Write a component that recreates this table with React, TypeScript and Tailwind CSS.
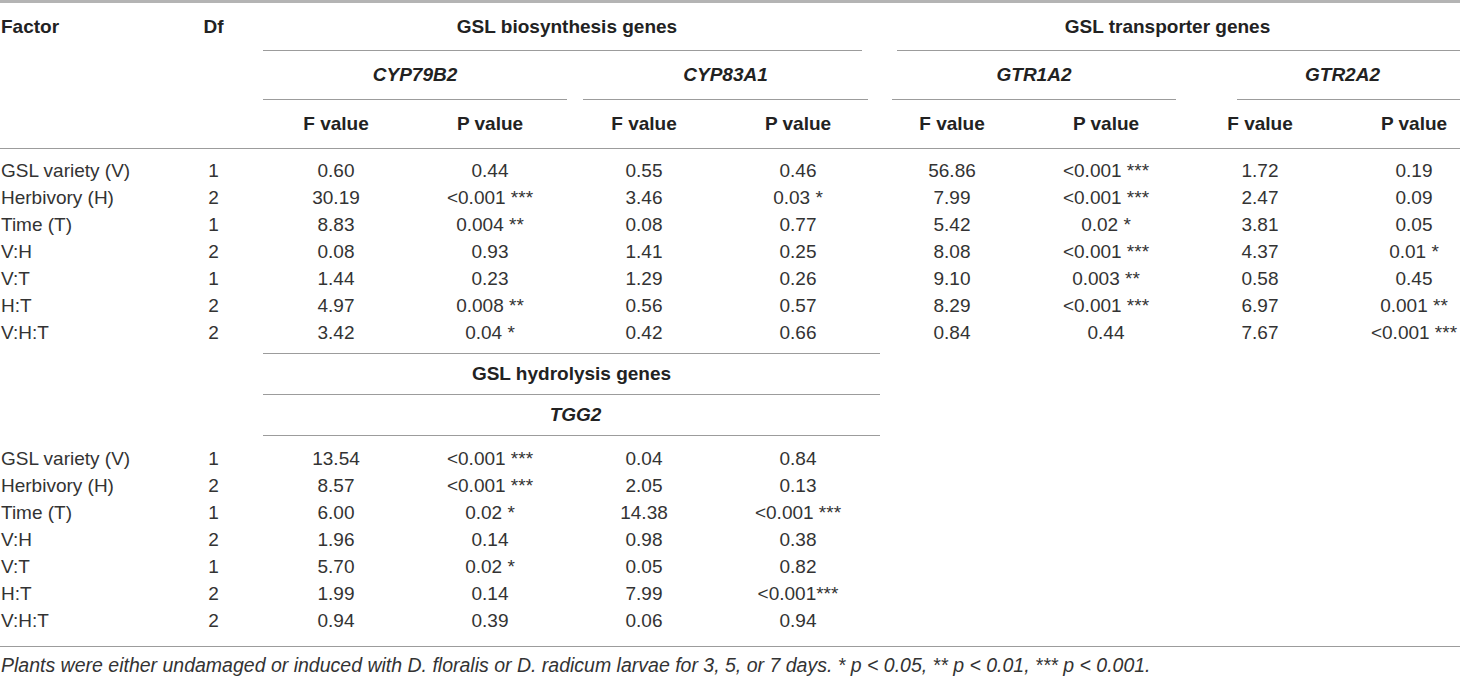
import React from "react";

const GRID = "grid grid-cols-[168px_91px_154px_154px_154px_154px_154px_154px_154px_123px]";

type Row = { f: string; df: string; v: string[] };

const block1: Row[] = [
  { f: "GSL variety (V)", df: "1", v: ["0.60", "0.44", "0.55", "0.46", "56.86", "<0.001 ***", "1.72", "0.19"] },
  { f: "Herbivory (H)", df: "2", v: ["30.19", "<0.001 ***", "3.46", "0.03 *", "7.99", "<0.001 ***", "2.47", "0.09"] },
  { f: "Time (T)", df: "1", v: ["8.83", "0.004 **", "0.08", "0.77", "5.42", "0.02 *", "3.81", "0.05"] },
  { f: "V:H", df: "2", v: ["0.08", "0.93", "1.41", "0.25", "8.08", "<0.001 ***", "4.37", "0.01 *"] },
  { f: "V:T", df: "1", v: ["1.44", "0.23", "1.29", "0.26", "9.10", "0.003 **", "0.58", "0.45"] },
  { f: "H:T", df: "2", v: ["4.97", "0.008 **", "0.56", "0.57", "8.29", "<0.001 ***", "6.97", "0.001 **"] },
  { f: "V:H:T", df: "2", v: ["3.42", "0.04 *", "0.42", "0.66", "0.84", "0.44", "7.67", "<0.001 ***"] },
];

const block2: Row[] = [
  { f: "GSL variety (V)", df: "1", v: ["13.54", "<0.001 ***", "0.04", "0.84"] },
  { f: "Herbivory (H)", df: "2", v: ["8.57", "<0.001 ***", "2.05", "0.13"] },
  { f: "Time (T)", df: "1", v: ["6.00", "0.02 *", "14.38", "<0.001 ***"] },
  { f: "V:H", df: "2", v: ["1.96", "0.14", "0.98", "0.38"] },
  { f: "V:T", df: "1", v: ["5.70", "0.02 *", "0.05", "0.82"] },
  { f: "H:T", df: "2", v: ["1.99", "0.14", "7.99", "<0.001***"] },
  { f: "V:H:T", df: "2", v: ["0.94", "0.39", "0.06", "0.94"] },
];

function DataRow({ row }: { row: Row }) {
  return (
    <div className={GRID + " h-[27px] items-center whitespace-nowrap"}>
      <div className="pl-[1px]">{row.f}</div>
      <div className="text-center">{row.df}</div>
      {row.v.map((val, i) => (
        <div key={i} className={i === 7 ? "text-center pl-[31px]" : "text-center"}>
          {val}
        </div>
      ))}
    </div>
  );
}

function Line({ className }: { className: string }) {
  return <div className={"h-px bg-[#9c9c9c] " + className} />;
}

export default function App() {
  return (
    <div className="w-[1460px] h-[677px] overflow-hidden bg-white font-['Liberation_Sans',Arial,sans-serif] text-[19px] leading-[24px] text-[#333333]">
      <div className="h-[3px] bg-[#b4b4b4]" />

      {/* header row 1 */}
      <div className={GRID + " h-[48px]"}>
        <div className="flex items-center pl-[1px] font-bold text-[#222222]">Factor</div>
        <div className="flex items-center justify-center font-bold text-[#222222]">Df</div>
        <div className="col-span-4 flex flex-col">
          <div className="flex flex-1 items-center justify-center font-bold text-[#222222]">GSL biosynthesis genes</div>
          <Line className="ml-[4px] mr-[13px]" />
        </div>
        <div className="col-span-4 flex flex-col">
          <div className="flex flex-1 items-center justify-center font-bold text-[#222222]">GSL transporter genes</div>
          <Line className="ml-[22px]" />
        </div>
      </div>

      {/* header row 2 */}
      <div className={GRID + " h-[49px]"}>
        <div />
        <div />
        <div className="col-span-2 ml-[4px] flex flex-col">
          <div className="flex flex-1 items-center justify-center font-bold italic text-[#222222]">CYP79B2</div>
          <Line className="" />
        </div>
        <div className="col-span-2 ml-[16px] mr-[7px] flex flex-col">
          <div className="flex flex-1 items-center justify-center font-bold italic text-[#222222]">CYP83A1</div>
          <Line className="" />
        </div>
        <div className="col-span-2 ml-[17px] mr-[7px] flex flex-col">
          <div className="flex flex-1 items-center justify-center font-bold italic text-[#222222]">GTR1A2</div>
          <Line className="" />
        </div>
        <div className="col-span-2 ml-[54px] flex flex-col">
          <div className="flex flex-1 items-center justify-center pr-[12px] font-bold italic text-[#222222]">GTR2A2</div>
          <Line className="" />
        </div>
      </div>

      {/* header row 3 */}
      <div className={GRID + " h-[48px] items-center font-bold text-[#222222]"}>
        <div />
        <div />
        <div className="text-center">F value</div>
        <div className="text-center">P value</div>
        <div className="text-center">F value</div>
        <div className="text-center">P value</div>
        <div className="text-center">F value</div>
        <div className="text-center">P value</div>
        <div className="text-center">F value</div>
        <div className="text-center pl-[31px]">P value</div>
      </div>
      <Line className="" />

      {/* block 1 */}
      <div className="pt-[8px] pb-[7px]">
        {block1.map((r, i) => (
          <DataRow key={i} row={r} />
        ))}
      </div>

      {/* hydrolysis headers */}
      <div className={GRID}>
        <div className="col-start-3 col-span-4 ml-[4px] mr-[-5px] flex flex-col">
          <Line className="" />
          <div className="flex h-[40px] items-center justify-center font-bold text-[#222222]">GSL hydrolysis genes</div>
          <Line className="" />
          <div className="flex h-[40px] items-center justify-center pl-[8px] font-bold italic text-[#222222]">TGG2</div>
          <Line className="" />
        </div>
      </div>

      {/* block 2 */}
      <div className="pt-[9px] pb-[12px]">
        {block2.map((r, i) => (
          <DataRow key={i} row={r} />
        ))}
      </div>
      <Line className="" />

      <div className="pt-[6px] pl-[1px] text-[19.5px] italic whitespace-nowrap">
        Plants were either undamaged or induced with D. floralis or D. radicum larvae for 3, 5, or 7 days. * p &lt; 0.05, ** p &lt; 0.01, *** p &lt; 0.001.
      </div>
    </div>
  );
}
